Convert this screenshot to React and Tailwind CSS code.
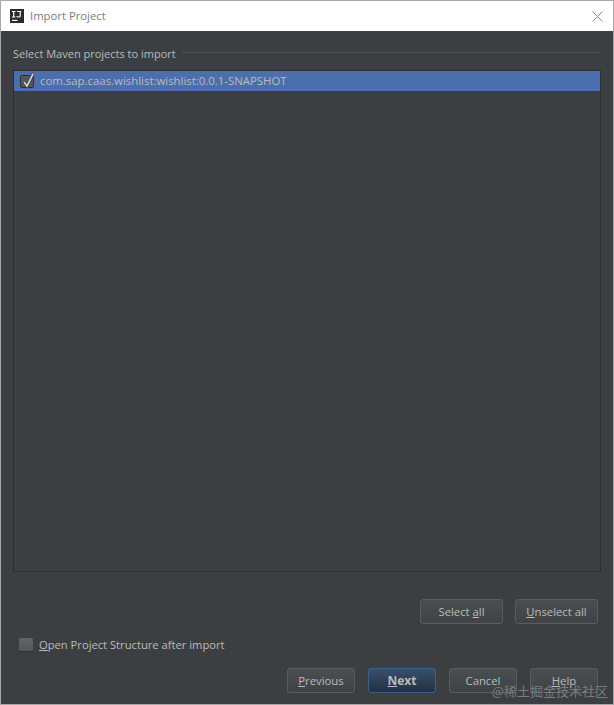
import React from 'react';

const font = { fontFamily: '"Open Sans", "Noto Sans", sans-serif' };

function DialogButton({ children, width = 'w-[68px]' }) {
  return (
    <button className={`${width} h-[25px] flex items-center justify-center rounded-[3px] border border-[#5a5c5e] bg-gradient-to-b from-[#4a4e50] to-[#3f4345] text-[11.3px] text-[#bbbbbb]`}>
      <span className="pt-px">{children}</span>
    </button>
  );
}

export default function App() {
  return (
    <div style={font} className="relative w-[614px] h-[705px] flex flex-col overflow-hidden border border-[#a8a8a8] bg-[#3c3f41]">
      {/* TITLE BAR */}
      <div className="h-[30px] shrink-0 bg-white flex items-center pl-[9px] pr-[9px]">
        <svg width="14" height="14" viewBox="0 0 14 14" className="shrink-0">
          <rect width="14" height="14" fill="#2b2b2b" />
          <path d="M2 2.5h3.4M3.7 2.5v5.5M2 8h3.4M7 2.5h4.2M10.2 2.5v4.5q0 1-1 1H8q-1 0-1-1" stroke="#fff" strokeWidth="1.2" fill="none" />
          <rect x="2" y="10.8" width="5.5" height="1.2" fill="#fff" />
        </svg>
        <span className="ml-[6px] text-[11.3px] text-[#7c7c7c]">Import Project</span>
        <svg width="11" height="11" viewBox="0 0 11 11" className="ml-auto mr-[1px]">
          <path d="M0.5 0.5L10.5 10.5M10.5 0.5L0.5 10.5" stroke="#8a8a8a" strokeWidth="1" />
        </svg>
      </div>

      {/* CONTENT */}
      <div className="flex-1 flex flex-col pl-[12px] pr-[12px] pt-[15px]">
        <div className="flex items-center h-[17px] gap-[6px] text-[11px] text-[#bbbbbb]">
          <span>Select Maven projects to import</span>
          <div className="flex-1 h-px bg-[#505254] mr-[2px] -mt-[4px]" />
        </div>

        <div className="mt-[7px] h-[502px] border border-[#2b2d2e] bg-[#3c3f41]">
          <div className="h-[20px] bg-[#4b6eaf] flex items-center pl-[6px] gap-[6px] text-[11.4px] text-[#bbbbbb]">
            <span className="relative w-[14px] h-[13px] mt-px rounded-[2px] border border-[#2e2e2e] bg-[#55585a]">
              <svg width="15" height="16" viewBox="0 0 15 16" className="absolute left-0 -top-[3px]">
                <path d="M3 9L6 13L12 1" stroke="#2e2e2e" strokeWidth="3" fill="none" />
                <path d="M3 9L6 13L12 1" stroke="#d2d2d2" strokeWidth="1.8" fill="none" />
              </svg>
            </span>
            <span>com.sap.caas.wishlist:wishlist:0.0.1-SNAPSHOT</span>
          </div>
        </div>

        <div className="mt-[27px] flex justify-end gap-[12px] pr-[3px]">
          <DialogButton width="w-[83px]">Select <u>a</u>ll</DialogButton>
          <DialogButton width="w-[83px]"><u>U</u>nselect all</DialogButton>
        </div>

        <div className="mt-[12px] h-[18px] flex items-center pl-[6px] gap-[6px] text-[11.2px] leading-[18px] text-[#bbbbbb]">
          <span className="w-[14px] h-[14px] rounded-[2px] border-b border-[#2e3032] bg-gradient-to-b from-[#626466] to-[#55585a]" />
          <span><u>O</u>pen Project Structure after import</span>
        </div>

        <div className="mt-[14px] flex justify-end gap-[13px] pr-[3px]">
          <DialogButton><u>P</u>revious</DialogButton>
          <button className="w-[68px] h-[25px] flex items-center justify-center rounded-[3px] border border-[#3d6185] bg-gradient-to-b from-[#384f6b] to-[#233143] text-[12px] font-bold text-[#bbbbbb]">
            <span className="pt-px"><u>N</u>ext</span>
          </button>
          <DialogButton>Cancel</DialogButton>
          <DialogButton><u>H</u>elp</DialogButton>
        </div>
      </div>

      {/* WATERMARK */}
      <div className="absolute right-[5px] bottom-[5px] text-[13px] leading-[16px] text-[#7a7c7e]" style={{ fontFamily: '"Noto Sans CJK SC", sans-serif' }}>
        @稀土掘金技术社区
      </div>
    </div>
  );
}
